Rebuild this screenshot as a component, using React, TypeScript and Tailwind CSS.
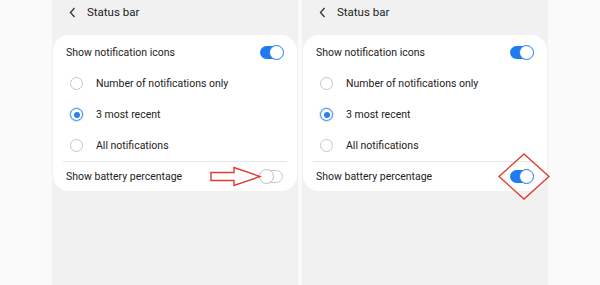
import React from "react";

const font = { fontFamily: "Roboto, 'Noto Sans', sans-serif" };

function Toggle({ on }: { on: boolean }) {
  if (on) {
    return (
      <div className="relative w-[23px] h-[13px] rounded-full bg-[#1f7cf0]">
        <div className="absolute right-[-1px] top-[-1px] w-[15px] h-[15px] rounded-full bg-white border-[1.5px] border-[#1f7cf0]" />
      </div>
    );
  }
  return (
    <div className="relative w-[23px] h-[13px] rounded-full border border-[#c9c9c9] bg-white">
      <div className="absolute left-[-2px] top-[-2px] w-[15px] h-[15px] rounded-full bg-white border border-[#c0c0c0]" />
    </div>
  );
}

function Radio({ checked }: { checked?: boolean }) {
  return checked ? (
    <div className="w-[13px] h-[13px] rounded-full border-[1.5px] border-[#3a8cf0] flex items-center justify-center bg-white shadow-[0_0_0_1px_#d6e6fb]">
      <div className="w-[6px] h-[6px] rounded-full bg-[#2f80ee]" />
    </div>
  ) : (
    <div className="w-[13px] h-[13px] rounded-full border border-[#c6c6c6] bg-white" />
  );
}

function Phone({ batteryOn, mark }: { batteryOn: boolean; mark: "arrow" | "diamond" }) {
  const options = [
    { label: "Number of notifications only", checked: false },
    { label: "3 most recent", checked: true },
    { label: "All notifications", checked: false },
  ];
  return (
    <div className="relative w-[246px] h-full bg-[#f1f1f1] flex flex-col" style={font}>
      <div className="h-[25px] flex items-center pl-[17px] gap-[11px]">
        <svg width="7" height="11" viewBox="0 0 7 11">
          <polyline points="5.5,1 1.5,5.5 5.5,10" fill="none" stroke="#333" strokeWidth="1.3" />
        </svg>
        <span className="text-[11.5px] text-[#222]">Status bar</span>
      </div>
      <div className="mt-[10px] mx-[1px] bg-white rounded-[16px] pt-[2px] flex flex-col">
        <div className="h-[31px] flex items-center justify-between pl-[13px] pr-[14px]">
          <span className="text-[10.5px] text-[#222]">Show notification icons</span>
          <Toggle on />
        </div>
        {options.map((o) => (
          <div key={o.label} className="h-[31px] flex items-center pl-[17px] gap-[13px]">
            <Radio checked={o.checked} />
            <span className="text-[10.5px] text-[#222]">{o.label}</span>
          </div>
        ))}
        <div className="mx-[10px] h-px bg-[#e6e6e6]" />
        <div className="relative h-[29px] flex items-center justify-between pl-[13px] pr-[14px]">
          <span className="text-[10.5px] text-[#222]">Show battery percentage</span>
          <Toggle on={batteryOn} />
          {mark === "arrow" && (
            <svg className="absolute left-[157px] top-[4px]" width="52" height="21" viewBox="0 0 52 21">
              <polygon
                points="1,6.5 24,6.5 24,1.5 50,10.5 24,19.5 24,14.5 1,14.5"
                fill="none"
                stroke="#e03a35"
                strokeWidth="1.4"
              />
            </svg>
          )}
          {mark === "diamond" && (
            <svg className="absolute left-[195px] top-[-9px]" width="52" height="47" viewBox="0 0 52 47">
              <polygon points="26,1 51,23.5 26,46 1,23.5" fill="none" stroke="#e03a35" strokeWidth="1.4" />
            </svg>
          )}
        </div>
      </div>
    </div>
  );
}

export default function App() {
  return (
    <div className="w-[600px] h-[285px] bg-[#fafafa] flex overflow-hidden">
      <div className="w-[52px]" />
      <Phone batteryOn={false} mark="arrow" />
      <div className="w-[4px]" />
      <Phone batteryOn mark="diamond" />
    </div>
  );
}
